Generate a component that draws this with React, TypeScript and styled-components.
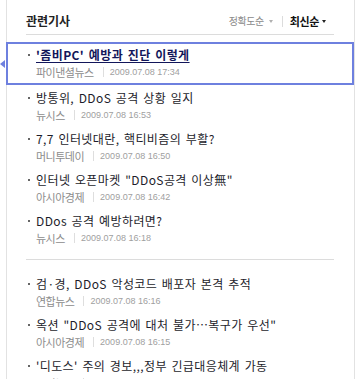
import React from "react";
import styled, { createGlobalStyle } from "styled-components";

const Global = createGlobalStyle`
  html, body { margin: 0; padding: 0; background: #fff; overflow: hidden; }
  body { font-family: "Noto Sans CJK KR", "Noto Sans", sans-serif; }
`;

const Panel = styled.div`
  margin-left: 6px;
  width: 347px;
  min-height: 420px;
  border-left: 1px solid #e2e2e2;
  border-right: 1px solid #e2e2e2;
  background: #fff;
`;

const Header = styled.div`
  margin: 0 20px 7px 19px;
  padding: 13px 0 5px;
  border-bottom: 1px solid #dcdcdc;
  display: flex;
  align-items: center;
  justify-content: space-between;
`;

const Title = styled.h2`
  margin: 0;
  font-size: 12px;
  line-height: 16px;
  font-weight: 700;
  color: #222;
  letter-spacing: 0;
`;

const Sort = styled.div`
  display: flex;
  align-items: center;
  padding-right: 8px;
`;

const SortOption = styled.span<{ $active?: boolean }>`
  display: inline-flex;
  align-items: center;
  font-size: ${(p) => (p.$active ? "11px" : "10px")};
  line-height: 16px;
  font-weight: ${(p) => (p.$active ? 700 : 400)};
  color: ${(p) => (p.$active ? "#111" : "#8a8a8a")};
  letter-spacing: -0.4px;
  &::after {
    content: "";
    margin-left: ${(p) => (p.$active ? "3px" : "5px")};
    border-top: 3px solid ${(p) => (p.$active ? "#222" : "#b0b0b0")};
    border-left: 2px solid transparent;
    border-right: 2px solid transparent;
  }
`;

const SortDivider = styled.span`
  width: 1px;
  height: 11px;
  background: #dcdcdc;
  margin: 0 7px 0 9px;
`;

const List = styled.ul`
  list-style: none;
  margin: 0;
  padding: 0;
`;

const Item = styled.li<{ $selected?: boolean }>`
  position: relative;
  padding: ${(p) => (p.$selected ? "2px 0 3px 20px" : "4px 0 3px 21px")};
  margin-left: ${(p) => (p.$selected ? "-1px" : "0")};
  border: ${(p) => (p.$selected ? "2px solid #6e80df" : "0")};
  ${(p) =>
    p.$selected &&
    `
    &::before {
      content: "";
      position: absolute;
      left: -8px;
      top: 50%;
      transform: translateY(-50%);
      border-right: 5px solid #6e80df;
      border-top: 4px solid transparent;
      border-bottom: 4px solid transparent;
    }
  `}
`;

const Headline = styled.a<{ $selected?: boolean }>`
  display: flex;
  align-items: center;
  font-size: 12px;
  line-height: 18px;
  white-space: nowrap;
  color: ${(p) => (p.$selected ? "#12165a" : "#1d1d2b")};
  font-weight: ${(p) => (p.$selected ? 700 : 400)};
  text-decoration: ${(p) => (p.$selected ? "underline" : "none")};
  text-underline-offset: 2px;
  letter-spacing: 0.4px;
  word-spacing: 1.5px;
`;

const Bullet = styled.span`
  flex: none;
  width: 2px;
  height: 2px;
  background: #666;
  margin-right: 6px;
`;

const Meta = styled.div`
  display: flex;
  align-items: center;
  padding-left: 8px;
  line-height: 16px;
`;

const Source = styled.span`
  font-size: 11px;
  color: #8c8c8c;
  letter-spacing: -0.5px;
`;

const MetaDivider = styled.span`
  width: 1px;
  height: 10px;
  background: #dedede;
  margin: 0 6px 0 9px;
`;

const DateText = styled.span`
  font-family: "Liberation Sans", Arial, sans-serif;
  font-size: 9px;
  color: #a0a0a0;
`;

const GroupDivider = styled.hr`
  margin: 10px 20px 11px 19px;
  border: 0;
  border-top: 1px solid #dcdcdc;
  height: 0;
`;

type Article = { title: string; source: string; date: string };

const group1: Article[] = [
  { title: "'좀비PC' 예방과 진단 이렇게", source: "파이낸셜뉴스", date: "2009.07.08 17:34" },
  { title: "방통위, DDoS 공격 상황 일지", source: "뉴시스", date: "2009.07.08 16:53" },
  { title: "7,7 인터넷대란, 핵티비즘의 부활?", source: "머니투데이", date: "2009.07.08 16:50" },
  { title: "인터넷 오픈마켓 \"DDoS공격 이상無\"", source: "아시아경제", date: "2009.07.08 16:42" },
  { title: "DDos 공격 예방하려면?", source: "뉴시스", date: "2009.07.08 16:18" },
];

const group2: Article[] = [
  { title: "검·경, DDoS 악성코드 배포자 본격 추적", source: "연합뉴스", date: "2009.07.08 16:16" },
  { title: "옥션 \"DDoS 공격에 대처 불가…복구가 우선\"", source: "아시아경제", date: "2009.07.08 16:15" },
  { title: "'디도스' 주의 경보,,,정부 긴급대응체계 가동", source: "노컷뉴스", date: "2009.07.08 16:10" },
];

const ArticleItem = ({ a, selected }: { a: Article; selected?: boolean }) => (
  <Item $selected={selected}>
    <Headline $selected={selected} href="#">
      <Bullet />
      {a.title}
    </Headline>
    <Meta>
      <Source>{a.source}</Source>
      <MetaDivider />
      <DateText>{a.date}</DateText>
    </Meta>
  </Item>
);

export default function App() {
  return (
    <>
      <Global />
      <Panel>
        <Header>
          <Title>관련기사</Title>
          <Sort>
            <SortOption>정확도순</SortOption>
            <SortDivider />
            <SortOption $active>최신순</SortOption>
          </Sort>
        </Header>
        <List>
          {group1.map((a, i) => (
            <ArticleItem key={i} a={a} selected={i === 0} />
          ))}
        </List>
        <GroupDivider />
        <List>
          {group2.map((a, i) => (
            <ArticleItem key={i} a={a} />
          ))}
        </List>
      </Panel>
    </>
  );
}
